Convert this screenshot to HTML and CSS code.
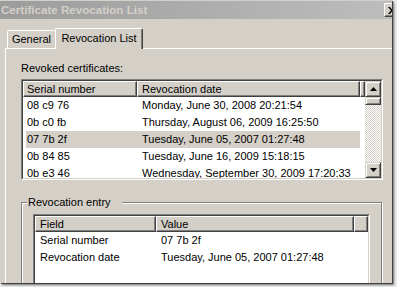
FILE: index.html
```html
<!DOCTYPE html>
<html>
<head>
<meta charset="utf-8">
<link rel="stylesheet" href="styles.css">
</head>
<body>
<div class="shot">
  <div class="win">
    <div class="titlebar">
      <span class="title">Certificate Revocation List</span>
      <span class="close">
        <svg width="8" height="7" viewBox="0 0 8 7"><path d="M0 0h2l2 2.5L6 0h2L5 3.5 8 7H6L4 4.5 2 7H0l3-3.5z" fill="#000"/></svg>
      </span>
    </div>
    <div class="tabs">
      <div class="tab">General</div>
      <div class="tab sel">Revocation List</div>
    </div>
    <div class="panel">
      <div class="lbl">Revoked certificates:</div>
      <div class="list big">
        <div class="inner">
          <div class="lv">
            <div class="hdr">
              <div class="hc b1">Serial number</div>
              <div class="hc b2">Revocation date</div>
              <div class="hc b3"></div>
            </div>
            <div class="row"><span class="r1">08 c9 76</span><span class="r2">Monday, June 30, 2008 20:21:54</span></div>
            <div class="row"><span class="r1">0b c0 fb</span><span class="r2">Thursday, August 06, 2009 16:25:50</span></div>
            <div class="row selrow"><span class="r1">07 7b 2f</span><span class="r2">Tuesday, June 05, 2007 01:27:48</span></div>
            <div class="row"><span class="r1">0b 84 85</span><span class="r2">Tuesday, June 16, 2009 15:18:15</span></div>
            <div class="row"><span class="r1">0b e3 46</span><span class="r2">Wednesday, September 30, 2009 17:20:33</span></div>
          </div>
          <div class="sb">
            <div class="btn"><svg width="7" height="4" viewBox="0 0 7 4"><path d="M3.5 0L7 4H0z" fill="#000"/></svg></div>
            <div class="thumb"></div>
            <div class="track"></div>
            <div class="btn"><svg width="7" height="4" viewBox="0 0 7 4"><path d="M0 0h7L3.5 4z" fill="#000"/></svg></div>
          </div>
        </div>
      </div>
      <div class="group">
        <div class="gtitle"><span class="gtext">Revocation entry</span></div>
        <div class="list small">
          <div class="inner">
            <div class="lv">
              <div class="hdr">
                <div class="hc s1">Field</div>
                <div class="hc s2">Value</div>
                <div class="hc s3"></div>
              </div>
              <div class="srow"><span class="t1">Serial number</span><span class="t2">07 7b 2f</span></div>
              <div class="srow"><span class="t1">Revocation date</span><span class="t2">Tuesday, June 05, 2007 01:27:48</span></div>
            </div>
          </div>
        </div>
      </div>
    </div>
  </div>
</div>
</body>
</html>
```

FILE: styles.css
```css
html, body {
  margin: 0;
  padding: 0;
}
body {
  font-family: "Liberation Sans", Arial, sans-serif;
  font-size: 11px;
  color: #000;
  background: #ececec;
}
.shot {
  width: 397px;
  height: 287px;
  overflow: hidden;
  background: #ececec;
}
.win {
  width: 392px;
  height: 283px;
  background: #d4d0c8;
  box-shadow: 1px 1px 0 #404040, 2px 2px 2px rgba(0, 0, 0, 0.55);
  overflow: hidden;
  display: flex;
  flex-direction: column;
}
.titlebar {
  height: 18px;
  margin-top: 1px;
  flex: none;
  display: flex;
  align-items: center;
  padding-left: 1px;
  overflow: hidden;
  background: linear-gradient(to right, #9c9c9c, #bdbdbd);
}
.title {
  font-weight: bold;
  font-size: 11.6px;
  color: #d4d0c8;
  line-height: 18px;
}
.close {
  margin-left: auto;
  margin-right: -8px;
  width: 16px;
  height: 14px;
  box-sizing: border-box;
  background: #d4d0c8;
  border: 1px solid;
  border-color: #fff #404040 #404040 #fff;
  box-shadow: inset -1px -1px 0 #808080;
  display: flex;
  align-items: center;
  justify-content: center;
  flex: none;
}
.tabs {
  height: 29px;
  flex: none;
  display: flex;
  align-items: flex-end;
  padding-left: 7px;
}
.tab {
  box-sizing: border-box;
  height: 18px;
  width: 48px;
  border-top: 1px solid #fff;
  border-left: 1px solid #fff;
  border-radius: 2px 2px 0 0;
  display: flex;
  align-items: center;
  justify-content: center;
  line-height: 13px;
}
.tab.sel {
  width: 88px;
  height: 21px;
  margin-bottom: -1px;
  padding-bottom: 1px;
  background: #d4d0c8;
  border-right: 1px solid #404040;
  box-shadow: inset -1px 0 0 #808080;
  position: relative;
  z-index: 1;
}
.panel {
  flex: 1;
  margin-left: 5px;
  border-top: 1px solid #fff;
  border-left: 1px solid #fff;
  padding-left: 15px;
  overflow: hidden;
}
.lbl {
  margin-top: 13px;
  line-height: 13px;
  height: 13px;
  margin-bottom: 4px;
}
.list {
  box-sizing: border-box;
  border: 1px solid;
  border-color: #808080 #fff #fff #808080;
  display: flex;
}
.list .inner {
  flex: 1;
  display: flex;
  border: 1px solid;
  border-color: #404040 #d4d0c8 #d4d0c8 #404040;
  background: #fff;
  overflow: hidden;
}
.list.big {
  width: 362px;
  height: 101px;
}
.lv {
  flex: 1;
  overflow: hidden;
}
.hdr {
  display: flex;
  height: 16px;
}
.hc {
  box-sizing: border-box;
  height: 16px;
  background: #d4d0c8;
  border-top: 1px solid #fff;
  border-left: 1px solid #fff;
  border-right: 1px solid #404040;
  border-bottom: 1px solid #404040;
  box-shadow: inset -1px -1px 0 #808080;
  line-height: 14px;
  white-space: nowrap;
  flex: none;
}
.b1 { width: 114px; padding-left: 3px; }
.b2 { width: 223px; padding-left: 4px; }
.b3 { flex: 1; }
.row {
  display: flex;
  height: 17px;
  line-height: 17px;
  margin-left: 3px;
  width: 334px;
  white-space: nowrap;
}
.row.selrow {
  background: #d4d0c8;
}
.r1 { width: 115px; padding-left: 1px; box-sizing: border-box; flex: none; }
.r2 { width: 219px; padding-left: 1px; box-sizing: border-box; flex: none; }
.sb {
  width: 16px;
  flex: none;
  display: flex;
  flex-direction: column;
}
.btn, .thumb {
  box-sizing: border-box;
  background: #d4d0c8;
  border: 1px solid;
  border-color: #d4d0c8 #404040 #404040 #d4d0c8;
  box-shadow: inset 1px 1px 0 #fff, inset -1px -1px 0 #808080;
  flex: none;
}
.btn {
  height: 16px;
  display: flex;
  align-items: center;
  justify-content: center;
}
.thumb {
  height: 8px;
}
.track {
  flex: 1;
  background: repeating-conic-gradient(#fff 0 25%, #d4d0c8 0 50%) 0 0 / 2px 2px;
}
.group {
  margin-top: 22px;
  width: 361px;
  height: 120px;
  box-sizing: border-box;
  border: 1px solid #808080;
  box-shadow: inset 1px 1px 0 #fff, 1px 1px 0 #fff;
  padding: 0 11px 0 11px;
}
.gtitle {
  display: flex;
  height: 14px;
  margin-top: -8px;
  margin-left: -6px;
}
.gtext {
  background: #d4d0c8;
  line-height: 14px;
  padding: 0 11px 0 1px;
}
.list.small {
  margin-top: 5px;
  width: 337px;
  height: 90px;
}
.s1 { width: 121px; padding-left: 4px; }
.s2 { width: 198px; padding-left: 4px; }
.s3 { flex: 1; }
.srow {
  display: flex;
  height: 17px;
  line-height: 17px;
  white-space: nowrap;
}
.t1 { width: 121px; padding-left: 5px; box-sizing: border-box; flex: none; }
.t2 { padding-left: 5px; flex: none; }
```
